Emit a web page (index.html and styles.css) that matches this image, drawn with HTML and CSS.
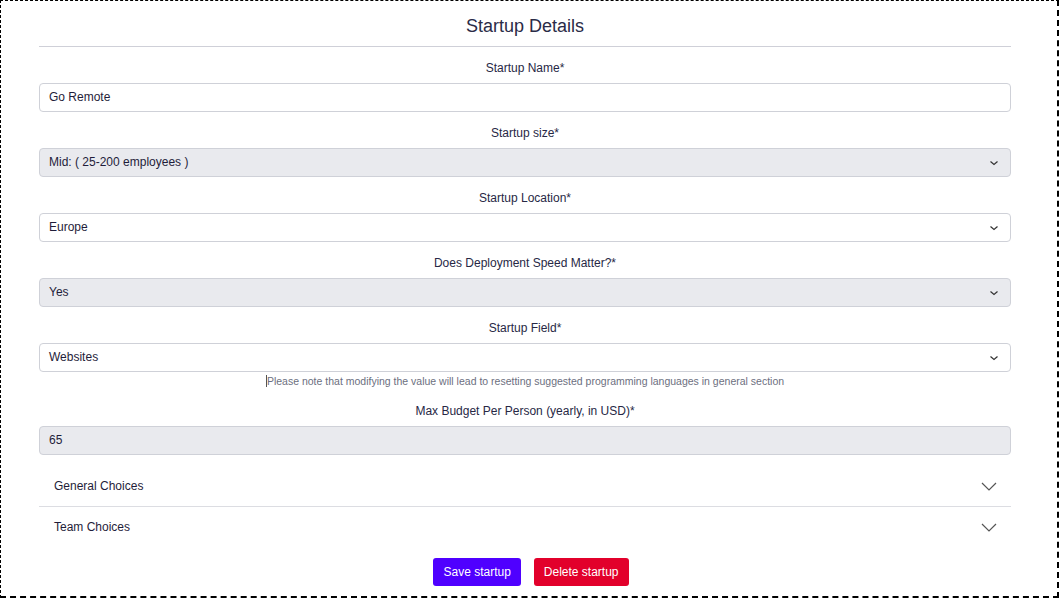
FILE: index.html
```html
<!DOCTYPE html>
<html>
<head>
<meta charset="utf-8">
<link rel="stylesheet" href="styles.css">
</head>
<body>
<div class="frame">
  <h1 class="title">Startup Details</h1>
  <hr class="rule">

  <div class="group">
    <label class="label">Startup Name*</label>
    <div class="field">Go Remote</div>
  </div>

  <div class="group">
    <label class="label">Startup size*</label>
    <div class="field select disabled"><span>Mid: ( 25-200 employees )</span>
      <svg class="caret" width="10" height="6" viewBox="0 0 10 6"><path d="M1.5 1.5l3.5 3 3.5-3" fill="none" stroke="#333" stroke-width="1.2"/></svg>
    </div>
  </div>

  <div class="group">
    <label class="label">Startup Location*</label>
    <div class="field select"><span>Europe</span>
      <svg class="caret" width="10" height="6" viewBox="0 0 10 6"><path d="M1.5 1.5l3.5 3 3.5-3" fill="none" stroke="#333" stroke-width="1.2"/></svg>
    </div>
  </div>

  <div class="group">
    <label class="label">Does Deployment Speed Matter?*</label>
    <div class="field select disabled"><span>Yes</span>
      <svg class="caret" width="10" height="6" viewBox="0 0 10 6"><path d="M1.5 1.5l3.5 3 3.5-3" fill="none" stroke="#333" stroke-width="1.2"/></svg>
    </div>
  </div>

  <div class="group with-help">
    <label class="label">Startup Field*</label>
    <div class="field select"><span>Websites</span>
      <svg class="caret" width="10" height="6" viewBox="0 0 10 6"><path d="M1.5 1.5l3.5 3 3.5-3" fill="none" stroke="#333" stroke-width="1.2"/></svg>
    </div>
    <p class="help"><span class="cursor"></span>Please note that modifying the value will lead to resetting suggested programming languages in general section</p>
  </div>

  <div class="group">
    <label class="label">Max Budget Per Person (yearly, in USD)*</label>
    <div class="field disabled">65</div>
  </div>

  <div class="accordion">
    <div class="acc-row">
      <span>General Choices</span>
      <svg class="acc-caret" width="16" height="9" viewBox="0 0 16 9"><path d="M1 1l7 7 7-7" fill="none" stroke="#555" stroke-width="1.2"/></svg>
    </div>
    <div class="acc-row">
      <span>Team Choices</span>
      <svg class="acc-caret" width="16" height="9" viewBox="0 0 16 9"><path d="M1 1l7 7 7-7" fill="none" stroke="#555" stroke-width="1.2"/></svg>
    </div>
  </div>

  <div class="actions">
    <button class="btn btn-save">Save startup</button>
    <button class="btn btn-delete">Delete startup</button>
  </div>
</div>
</body>
</html>
```

FILE: styles.css
```css
* { box-sizing: border-box; }
html, body { margin: 0; padding: 0; background: #fff; }
body {
  font-family: "Liberation Sans", Arial, sans-serif;
  font-size: 12px;
  color: #272845;
}
.frame {
  width: 1059px;
  height: 598px;
  overflow: hidden;
  border-top: 1px dashed #000;
  border-left: 1px dashed #000;
  border-right: 2px dashed #000;
  border-bottom: 2px dashed #000;
  padding: 14px 46px 0 38px;
}
.title {
  margin: 0;
  font-size: 18px;
  font-weight: 400;
  line-height: 22px;
  text-align: center;
  color: #2a2b47;
}
.rule {
  margin: 9px 0 0 0;
  border: 0;
  border-top: 1px solid #cfd0d8;
  height: 0;
}
.group {
  display: flex;
  flex-direction: column;
  margin-top: 11px;
}
.label {
  display: block;
  text-align: center;
  line-height: 18px;
  padding-top: 1px;
  margin-bottom: 6px;
}
.field {
  height: 29px;
  border: 1px solid #cfd1d8;
  border-radius: 4px;
  padding: 0 9px 1px 9px;
  display: flex;
  align-items: center;
  justify-content: space-between;
  background: #fff;
  color: #1f1d3a;
}
.field.disabled { background: #e9eaee; }
.caret { margin-right: 2px; margin-top: 1px; }
.help {
  margin: 2px 0 0 0;
  font-size: 10.5px;
  line-height: 14px;
  color: #6c6f80;
  text-align: center;
  display: flex;
  justify-content: center;
  align-items: center;
}
.cursor {
  display: inline-block;
  width: 1px;
  height: 12px;
  background: #555;
}
.with-help + .group { margin-top: 13px; }
.accordion { margin-top: 11px; }
.acc-row {
  height: 40px;
  display: flex;
  align-items: center;
  justify-content: space-between;
  padding: 0 14px 0 15px;
  color: #1f1d3a;
}
.acc-row:first-child {
  height: 41px;
  border-bottom: 1px solid #dcdde2;
}
.actions {
  margin-top: 11px;
  display: flex;
  justify-content: center;
  gap: 13px;
  padding-left: 12px;
}
.btn {
  height: 28px;
  border: 0;
  border-radius: 3px;
  padding: 0 10px;
  font-family: "Liberation Sans", Arial, sans-serif;
  font-size: 12px;
  color: #fff;
}
.btn-save { background: #4f00ff; }
.btn-delete { background: #e2002b; }
```
